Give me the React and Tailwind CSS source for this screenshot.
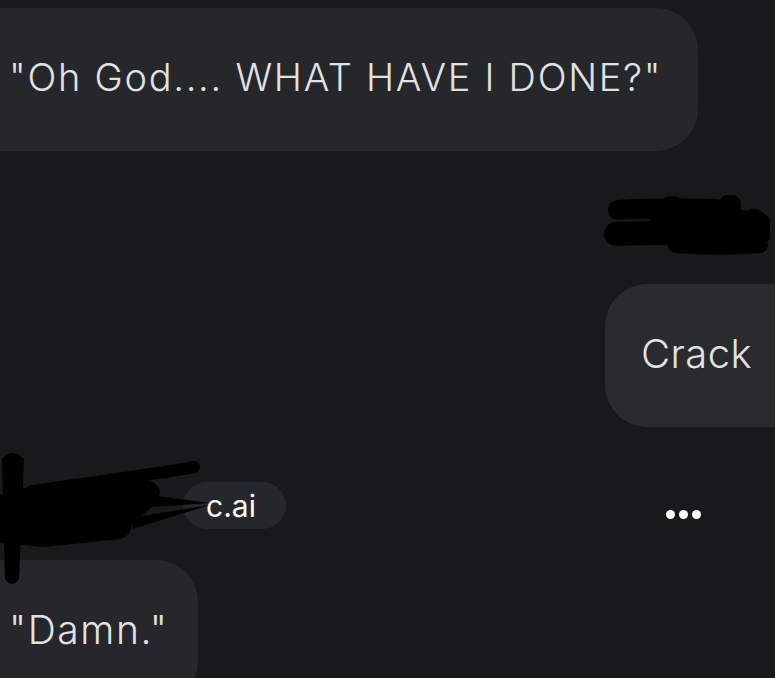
import React from 'react';

// scribbled-out name above the user's bubble
const RightScribble = () => (
  <svg width="166" height="62" viewBox="0 0 166 62" className="block">
    <g stroke="#000" strokeLinecap="round" strokeLinejoin="round" fill="none">
      <path d="M14 15 C 40 13, 80 13, 112 14" strokeWidth="20" />
      <path d="M12 39 C 50 37, 100 38, 150 40" strokeWidth="24" />
      <path d="M62 30 C 90 28, 130 30, 152 34" strokeWidth="34" />
      <path d="M72 50 C 100 52, 130 52, 156 50" strokeWidth="16" />
    </g>
    <circle cx="68" cy="13" r="12" fill="#000" />
    <circle cx="126" cy="10" r="11" fill="#000" />
    <circle cx="150" cy="26" r="12" fill="#000" />
  </svg>
);

// scribbled-out character name next to the c.ai badge
const LeftScribble = () => (
  <svg width="230" height="145" viewBox="0 0 230 145" className="block">
    <g fill="#000">
      <path d="M2 14 Q 12 2 24 14 L 19 134 Q 12 144 5 134 Z" />
      <path d="M0 50 Q 20 42 40 42 L 150 36 Q 166 42 156 58 L 132 80 Q 130 92 120 94 L 44 102 Q 20 100 0 98 Z" />
      <path d="M134 48 L 210 58 L 150 62 Z" />
      <path d="M136 72 L 210 60 L 132 84 Z" />
    </g>
    <path d="M32 46 C 90 38, 150 30, 194 22" stroke="#000" strokeWidth="12" strokeLinecap="round" fill="none" />
  </svg>
);

const App = () => {
  return (
    <div className="relative w-[775px] h-[678px] overflow-hidden bg-[#19191b] font-['Inter',sans-serif] font-light text-[#e2e2e4]">
      <div className="flex flex-col pt-2">
        {/* character message */}
        <div className="-ml-12 w-[746px] h-[143px] rounded-[42px] bg-[#26272b] flex items-center pl-[57px] pb-[6px]">
          <span className="text-[38px] leading-none tracking-[0.045em]">"Oh God.... WHAT HAVE I DONE?"</span>
        </div>

        {/* user name (scribbled) */}
        <div className="self-end mt-[44px] mr-[5px]">
          <RightScribble />
        </div>

        {/* user message */}
        <div className="self-end -mr-12 mt-[27px] w-[218px] h-[143px] rounded-[42px] bg-[#2a2b2f] flex items-center pl-[36px] pb-[3px]">
          <span className="text-[40px] leading-none tracking-[0.01em]">Crack</span>
        </div>

        {/* character header row */}
        <div className="relative mt-[55px] h-[47px] flex items-center">
          <div className="ml-[183px] h-[47px] w-[103px] rounded-full bg-[#26272b] flex items-center pl-[23px]">
            <span className="text-[30px] leading-none font-normal text-white">c.ai</span>
          </div>
          <div className="ml-auto mr-[74px] mt-[18px] flex gap-[4px]">
            <span className="w-[9px] h-[9px] rounded-full bg-white" />
            <span className="w-[9px] h-[9px] rounded-full bg-white" />
            <span className="w-[9px] h-[9px] rounded-full bg-white" />
          </div>
          <div className="absolute left-0 -top-[37px]">
            <LeftScribble />
          </div>
        </div>

        {/* character message */}
        <div className="-ml-12 mt-[31px] w-[246px] h-[143px] rounded-[42px] bg-[#26272b] flex items-start pt-[50px] pl-[57px]">
          <span className="text-[39px] leading-none tracking-[0.04em]">"Damn."</span>
        </div>
      </div>
    </div>
  );
};

export default App;
